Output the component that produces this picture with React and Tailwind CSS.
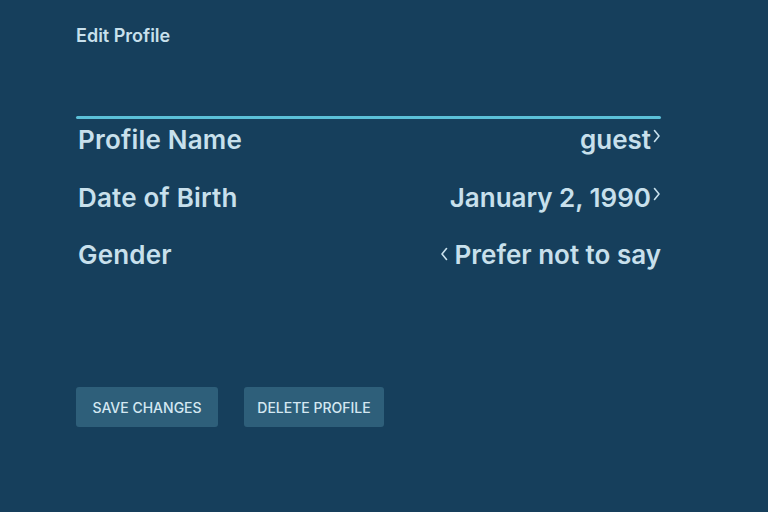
import React from "react";

function ChevronRight() {
  return (
    <svg width="8" height="14" viewBox="0 0 8 14" className="ml-[2px] mt-[-8px]">
      <path d="M1.5 1.5 L6 7 L1.5 12.5" fill="none" stroke="#c8e0ec" strokeWidth="1.6" strokeLinecap="round" strokeLinejoin="round" />
    </svg>
  );
}
function ChevronLeft() {
  return (
    <svg width="8" height="14" viewBox="0 0 8 14" className="mr-[7px] mt-[-2px]">
      <path d="M6.5 1.5 L2 7 L6.5 12.5" fill="none" stroke="#c8e0ec" strokeWidth="1.6" strokeLinecap="round" strokeLinejoin="round" />
    </svg>
  );
}

export default function App() {
  const font = { fontFamily: "Inter, 'Noto Sans', sans-serif" };
  return (
    <div className="w-[768px] h-[512px] bg-[#163f5c] text-[#c8e0ec] overflow-hidden" style={font}>
      <div className="pl-[76px] pr-[107px] pt-[24px]">
        <h1 className="text-[18px] font-semibold leading-[23px]">Edit Profile</h1>
        <div className="mt-[69px] h-[3px] rounded-full bg-[#5bc0d8]" />
        <div className="flex flex-col">
          <div className="flex items-center justify-between h-[41px]">
            <span className="text-[26px] font-semibold pl-[2px] tracking-[0.2px]">Profile Name</span>
            <span className="flex items-center text-[26px] font-semibold">guest<ChevronRight /></span>
          </div>
          <div className="flex items-center justify-between h-[41px] mt-[17px]">
            <span className="text-[26px] font-semibold pl-[2px] tracking-[0.2px]">Date of Birth</span>
            <span className="flex items-center text-[26px] font-semibold">January 2, 1990<ChevronRight /></span>
          </div>
          <div className="flex items-center justify-between h-[41px] mt-[16px]">
            <span className="text-[26px] font-semibold pl-[2px] tracking-[0.2px]">Gender</span>
            <span className="flex items-center text-[26px] font-semibold"><ChevronLeft />Prefer not to say</span>
          </div>
        </div>
        <div className="flex gap-[26px] mt-[112px]">
          <button className="w-[142px] h-[40px] rounded-[3px] bg-[#2e5f7a] text-[14px] font-medium text-[#d4e8f2]">SAVE CHANGES</button>
          <button className="w-[140px] h-[40px] rounded-[3px] bg-[#2e5f7a] text-[14px] font-medium text-[#d4e8f2]">DELETE PROFILE</button>
        </div>
      </div>
    </div>
  );
}
